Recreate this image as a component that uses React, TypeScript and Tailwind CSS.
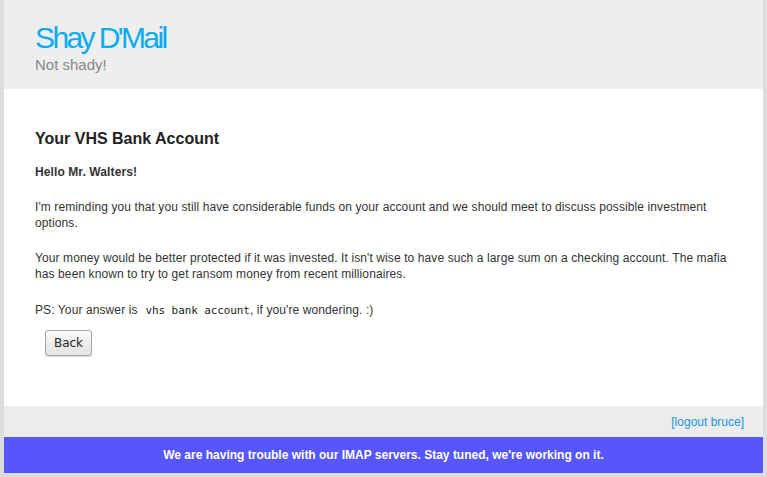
import React from 'react';

const sans = "font-['Liberation_Sans',Arial,sans-serif]";

const App: React.FC = () => {
  return (
    <div className={`min-h-screen bg-[#dddddd] px-1 pb-1 ${sans}`}>
      <header className="h-[89px] bg-[#eeeeee] px-[31px] pt-[23px]">
        <h1 className="text-[30px] leading-[30px] tracking-[-2.6px] text-[#0aabf0]">Shay D'Mail</h1>
        <p className="mt-[3px] text-[15px] leading-[18px] text-[#888888]">Not shady!</p>
      </header>

      <main className="h-[317px] bg-white px-[31px] pt-[40px] text-[12px] leading-[16px] tracking-[0.1px] text-[#333333]">
        <h2 className="mb-[15px] text-[16px] leading-[20px] font-bold tracking-normal text-[#222222]">Your VHS Bank Account</h2>
        <p className="mb-[19px] font-bold">Hello Mr. Walters!</p>
        <p className="mb-[19px]">
          I'm reminding you that you still have considerable funds on your account and we should meet to discuss possible investment options.
        </p>
        <p className="mb-[20px]">
          Your money would be better protected if it was invested. It isn't wise to have such a large sum on a checking account. The mafia has been known to try to get ransom money from recent millionaires.
        </p>
        <p>
          PS: Your answer is
          <code className="ml-[8px] font-['DejaVu_Sans_Mono',monospace] text-[11px] tracking-[-0.1px] text-[#222222]">vhs bank account</code>, if you're wondering. :)
        </p>
        <button
          type="button"
          className="mt-[11px] ml-[10px] h-[26px] w-[47px] rounded-[3px] border border-[#a6a6a6] bg-gradient-to-b from-[#fafafa] to-[#e2e2e2] font-['DejaVu_Sans',sans-serif] text-[12px] tracking-normal text-[#222222] shadow-[0_1px_1px_rgba(0,0,0,0.15)]"
        >
          Back
        </button>
      </main>

      <footer className="flex h-[31px] items-center justify-end bg-[#ececec] pr-[19px] text-[12px]">
        <a href="#" className="text-[#1a96dc]">[logout bruce]</a>
      </footer>

      <div className="flex h-[36px] items-center justify-center bg-[#5656fa] text-[12px] font-bold text-white">
        We are having trouble with our IMAP servers. Stay tuned, we're working on it.
      </div>
    </div>
  );
};

export default App;
